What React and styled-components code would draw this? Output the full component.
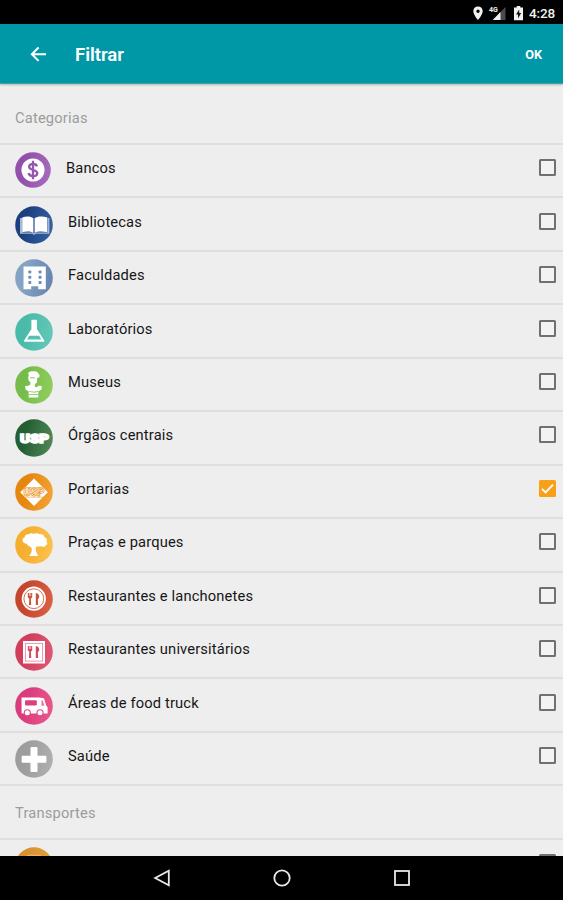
import styled, { createGlobalStyle } from "styled-components";

const GlobalStyle = createGlobalStyle`
  * {
    box-sizing: border-box;
  }
  body {
    margin: 0;
    background: #000;
    font-family: Roboto, "Liberation Sans", sans-serif;
  }
`;

const Screen = styled.div`
  width: 563px;
  height: 900px;
  display: flex;
  flex-direction: column;
  overflow: hidden;
  background-color: #eeeeee;
`;

const StatusBar = styled.div`
  height: 24px;
  flex-shrink: 0;
  display: flex;
  align-items: center;
  justify-content: flex-end;
  padding: 1px 7px 0 0;
  background-color: #000;
  color: #f2f2f2;
`;

const StatusIcons = styled.svg`
  display: block;
  margin-right: 4px;
`;

const Clock = styled.span`
  width: 27px;
  font-size: 13.5px;
  font-weight: 500;
  line-height: 22px;
  letter-spacing: -0.1px;
  white-space: nowrap;
`;

const AppBar = styled.header`
  height: 60px;
  flex-shrink: 0;
  display: flex;
  align-items: center;
  padding: 2px 21px 0 30px;
  background-color: #0097a7;
  border-bottom: 1px solid #4d9ba5;
  box-shadow: 0 1px 2px rgba(0, 0, 0, 0.25);
  color: #fff;
  z-index: 1;
`;

const Title = styled.h1`
  flex: 1;
  margin: 0 0 0 28px;
  font-size: 18.5px;
  font-weight: 600;
  letter-spacing: 0;
`;

const OkButton = styled.button`
  padding: 0;
  border: 0;
  background: none;
  color: #fff;
  font-family: inherit;
  font-size: 12.7px;
  font-weight: 700;
`;

const List = styled.main`
  flex: 1;
  min-height: 0;
  overflow: hidden;
`;

const SectionTitle = styled.h2`
  height: ${(props) => props.$height}px;
  margin: 0;
  padding: ${(props) => props.$top}px 0 0 15px;
  border-bottom: 2px solid #dfdfdf;
  color: #9c9c9c;
  font-size: 14.7px;
  font-weight: 400;
  line-height: 18px;
  letter-spacing: 0.18px;
`;

const Row = styled.div`
  height: 53.45px;
  display: flex;
  align-items: flex-start;
  padding: 7.2px 7px 0 15px;
  border-bottom: 2px solid #dfdfdf;
`;

const Badge = styled.svg`
  display: block;
  flex-shrink: 0;
  width: ${(props) => props.$size}px;
  height: ${(props) => props.$size}px;
`;

const Label = styled.span`
  flex: 1;
  margin: 6px 0 0 15px;
  color: #161616;
  font-size: 14.7px;
  line-height: 20px;
  letter-spacing: 0.15px;
`;

const Box = styled.span`
  width: 17px;
  height: 17px;
  margin-top: 7px;
  display: flex;
  flex-shrink: 0;
  border: ${(props) => (props.$checked ? "0" : "2px solid #707070")};
  border-radius: 1.5px;
  background-color: ${(props) => (props.$checked ? "#f9a01b" : "#f3f3f3")};
`;

const NavBar = styled.nav`
  height: 44px;
  flex-shrink: 0;
  display: flex;
  align-items: center;
  justify-content: center;
  gap: 102px;
  background-color: #000;
`;

const NavIcon = styled.svg`
  display: block;
  width: 18px;
  height: 18px;
  fill: none;
  stroke: #e8e8e8;
  stroke-width: 1.8;
`;

const Cutlery = ({ color }) => (
  <g fill={color}>
    <path d="M12.8 13h1.1v3h.6v-3h1v3h.6v-3h1.1v4.2l-1.3 1.5.3 6.3h-2.2l.3-6.3-1.5-1.5z" />
    <path d="M20.8 13c2.6.2 3.6 2.2 3.4 4.5l-1.3 1.8.2 5.7h-2.3z" />
  </g>
);

const categories = [
  {
    name: "Bancos",
    colors: ["#9250ac", "#a56abc"],
    size: 36,
    icon: (
      <>
        <circle cx="19" cy="19" r="12.2" fill="#fff" />
        <path
          d="M23.2 15.2c-.5-1.8-2-2.6-4.2-2.6-2.5 0-4.1 1.1-4.1 3 0 4.5 8.6 2.3 8.6 6.7 0 2-1.8 3.1-4.4 3.1-2.8 0-4.4-1.3-4.7-3.2M19 9.2v19.6"
          fill="none"
          stroke="#9656ae"
          strokeWidth="2.4"
        />
      </>
    ),
  },
  {
    name: "Bibliotecas",
    colors: ["#1c407f", "#315f9f"],
    icon: (
      <>
        <path d="M5 12h2v14.6h11l1 1 1-1h13V12h1.4v15.8H20.8L19 29l-1.8-1.2H5z" fill="#a9b9d3" />
        <path d="M7.2 11.5c4-1.4 8.6-1.2 11.2.8v14.5c-3-1.7-7.2-1.6-11.2-.6z" fill="#fff" />
        <path d="M19.6 12.3c2.6-2 8-2.2 12.8-.8v14.7c-4.2-1-9.8-1.1-12.8.6z" fill="#fff" />
      </>
    ),
  },
  {
    name: "Faculdades",
    colors: ["#84a2c4", "#6786b0"],
    icon: (
      <>
        <path d="M8.5 7.5h22.3v22.7h-7.6v-3h-7v3H8.5z" fill="#fff" />
        <g fill="#7190b7">
          <rect x="13.3" y="11.5" width="3" height="3" rx="0.8" />
          <rect x="13.3" y="16.8" width="3" height="3" rx="0.8" />
          <rect x="13.3" y="22" width="3" height="3" rx="0.8" />
          <rect x="23.6" y="11.5" width="3" height="3" rx="0.8" />
          <rect x="23.6" y="16.8" width="3" height="3" rx="0.8" />
          <rect x="23.6" y="22" width="3" height="3" rx="0.8" />
        </g>
      </>
    ),
  },
  {
    name: "Laboratórios",
    colors: ["#4bbba9", "#62c7b8"],
    icon: (
      <>
        <path
          d="M17.2 7.5v9L9.8 28h18.8l-7.4-11.5v-9z"
          fill="#fff"
          stroke="#fff"
          strokeWidth="1.6"
          strokeLinejoin="round"
        />
        <path d="M14.2 22.8h10l2 3.6H12z" fill="#57c1b0" />
      </>
    ),
  },
  {
    name: "Museus",
    colors: ["#76bc4a", "#8fcd5c"],
    icon: (
      <>
        <path
          d="M13.2 7.3c1.2-2.3 3.3-1.9 4.7-2 2.7-.6 5.4.4 5.6 2.6 1.7.8 1.5 2.9.2 3.5l-1.5.6-.4 4.7-2 1.4v2.4c1.3 1.6 3 .5 3.7-.8l3.2.2v3.4l-3.4 2.1v6.2h-9.6v-6l-3.3-2.3-.2-3.4 3.2-.1 2-1.4v-2.5l-1.5-.8-.8-3.4.8-2.7c-.8-.5-1-1.8-.7-3z"
          fill="#fff"
        />
        <path d="M15 11.8h5M14.2 25.2c2.7 1.2 6.5 1.2 9.2 0M14 28.6h9.4" fill="none" stroke="#81c552" strokeWidth="0.9" />
      </>
    ),
  },
  {
    name: "Órgãos centrais",
    colors: ["#245e33", "#4c8657"],
    icon: (
      <text
        x="19.6"
        y="24"
        textAnchor="middle"
        textLength="29"
        lengthAdjust="spacingAndGlyphs"
        fill="#fff"
        stroke="#fff"
        strokeWidth="1.6"
        fontSize="12.5"
        fontWeight="900"
      >
        USP
      </text>
    ),
  },
  {
    name: "Portarias",
    colors: ["#e5860e", "#f2a133"],
    checked: true,
    icon: (
      <>
        <path d="M19 5.5 32.8 19.3 19 33.1 5.2 19.3z" fill="#fff" />
        <path d="M9 14.6h20M9 24.2h20" stroke="#f0ac56" strokeWidth="0.7" />
        <text
          x="19"
          y="23"
          textAnchor="middle"
          textLength="21"
          lengthAdjust="spacingAndGlyphs"
          fill="#fff"
          stroke="#ec9a30"
          strokeWidth="0.8"
          fontSize="10"
          fontWeight="900"
        >
          USP
        </text>
      </>
    ),
  },
  {
    name: "Praças e parques",
    colors: ["#f4af2f", "#fac14c"],
    icon: (
      <path
        d="M7.5 14.5c-.2-2 1-2.9 2.1-3.1.2-2.6 2.2-3.5 4.2-3.2 1.4-1.4 3.4-1 4.5-.4 2-1 4.7-.7 5.9.2 2.4-.4 5 .8 5.2 3 1.9.8 3 2.4 2.2 4.4 1.1 1.4.7 3.5-.8 4-1 1.6-3.7 1.5-4.8.8l-5.2.6c-.3 3.2.5 6 2.3 9.2h-9c2.2-2.3 3.1-4.6 2.5-7.9l-2.3-2c-1.6 0-2.4-1-2.2-2.3-2.2.3-4.5-1.2-4.6-3.5z"
        fill="#fff"
      />
    ),
  },
  {
    name: "Restaurantes e lanchonetes",
    colors: ["#c5462f", "#d95f42"],
    icon: (
      <>
        <circle cx="18.8" cy="18.7" r="12.1" fill="#fff" />
        <circle cx="18.8" cy="18.7" r="9.9" fill="none" stroke="#d96e53" strokeWidth="1" />
        <Cutlery color="#cc523b" />
      </>
    ),
  },
  {
    name: "Restaurantes universitários",
    colors: ["#d03e5c", "#de5673"],
    icon: (
      <>
        <rect x="8" y="8" width="22" height="22.5" fill="#fff" />
        <rect x="10.4" y="10.4" width="17.2" height="17.7" fill="none" stroke="#e58e9f" strokeWidth="0.9" />
        <Cutlery color="#d4455f" />
      </>
    ),
  },
  {
    name: "Áreas de food truck",
    colors: ["#d93b7c", "#ea568c"],
    icon: (
      <>
        <path d="M6.5 10.5h17.8l4.7.8 2.3 7.5 1.3 1.4v6.3h-26z" fill="#fff" />
        <rect x="10" y="13.2" width="11.8" height="5.2" rx="1" fill="#db4180" />
        <path d="m26.5 13.2 1.4.6 1.4 5h-2.8z" fill="#e8739f" />
        <circle cx="12.3" cy="25.8" r="3.6" fill="#e04a84" />
        <circle cx="25" cy="25.8" r="3.6" fill="#e04a84" />
        <circle cx="12.3" cy="25.8" r="2.5" fill="#fff" />
        <circle cx="25" cy="25.8" r="2.5" fill="#fff" />
      </>
    ),
  },
  {
    name: "Saúde",
    colors: ["#9d9d9d", "#aeaeae"],
    icon: (
      <path
        d="M16.5 7h5q1 0 1 1v7.8h7.9q1 0 1 1v5q0 1-1 1h-7.9V31q0 1-1 1h-5q-1 0-1-1v-8.2H7.6q-1 0-1-1v-5q0-1 1-1h7.9V8q0-1 1-1z"
        fill="#fff"
      />
    ),
  },
];

const transports = [
  {
    name: "",
    colors: ["#d8912e", "#e0a23d"],
    icon: <rect x="11" y="7.8" width="16" height="20" rx="3" fill="#e8b468" />,
  },
];

function Item({ name, colors, icon, size = 38, checked, id }) {
  return (
    <Row>
      <Badge $size={size} viewBox="0 0 38 38">
        <defs>
          <linearGradient id={id} x1="0" y1="0.2" x2="1" y2="0.4">
            <stop offset="0.3" stopColor={colors[0]} />
            <stop offset="1" stopColor={colors[1]} />
          </linearGradient>
        </defs>
        <circle cx="19" cy="19" r="18.8" fill={`url(#${id})`} />
        {icon}
      </Badge>
      <Label>{name}</Label>
      <Box $checked={checked}>
        {checked && (
          <svg width="17" height="17" viewBox="0 0 17 17">
            <path d="m3 8.8 3.6 3.6L14 4.7" fill="none" stroke="#fff" strokeWidth="1.9" />
          </svg>
        )}
      </Box>
    </Row>
  );
}

export default function App() {
  return (
    <Screen>
      <GlobalStyle />
      <StatusBar>
        <StatusIcons width="52" height="18" viewBox="0 0 52 18">
          <path
            d="M5 2.6c-2.8 0-4.7 2-4.7 4.6C.3 10.5 5 16 5 16s4.7-5.5 4.7-8.8c0-2.6-1.9-4.6-4.7-4.6zm0 3a1.7 1.7 0 1 1 0 3.4 1.7 1.7 0 0 1 0-3.4z"
            fill="#f2f2f2"
            fillRule="evenodd"
          />
          <text x="16" y="8" fill="#f2f2f2" fontSize="7" fontWeight="700">
            4G
          </text>
          <path d="M32.5 3v13H19.7z" fill="#4b4b4b" />
          <path d="M27.5 8v8h-7.8z" fill="#f2f2f2" />
          <path d="M41 3.6h2.7V2.1h3.6v1.5H50v12.7h-9z" fill="#f2f2f2" />
          <path d="M46.2 5.4 43 10.6h2v3.8l3.2-5.3h-2z" fill="#111" />
        </StatusIcons>
        <Clock>4:28</Clock>
      </StatusBar>
      <AppBar>
        <svg width="17" height="17" viewBox="0 0 17 17">
          <path d="M16 8.2H2M8.6 1.5 1.8 8.2l6.8 6.7" fill="none" stroke="#fff" strokeWidth="2" />
        </svg>
        <Title>Filtrar</Title>
        <OkButton>OK</OkButton>
      </AppBar>
      <List>
        <SectionTitle $height={61} $top={25}>
          Categorias
        </SectionTitle>
        {categories.map((item, i) => (
          <Item key={item.name} id={`cat${i}`} {...item} />
        ))}
        <SectionTitle $height={53.5} $top={18}>
          Transportes
        </SectionTitle>
        {transports.map((item, i) => (
          <Item key={i} id={`transp${i}`} {...item} />
        ))}
      </List>
      <NavBar>
        <NavIcon viewBox="0 0 18 18">
          <path d="M15.8 1.7v14.6L2.2 9z" />
        </NavIcon>
        <NavIcon viewBox="0 0 18 18">
          <circle cx="9" cy="9" r="7.7" />
        </NavIcon>
        <NavIcon viewBox="0 0 18 18">
          <rect x="2" y="2" width="14" height="14" />
        </NavIcon>
      </NavBar>
    </Screen>
  );
}
